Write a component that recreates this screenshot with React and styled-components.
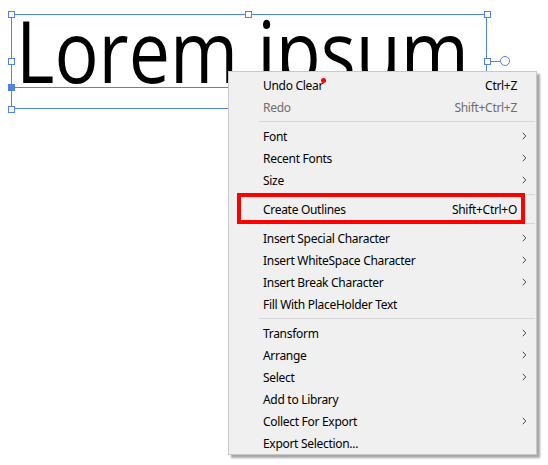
import React from "react";
import styled, { css, createGlobalStyle } from "styled-components";

const GlobalStyle = createGlobalStyle`
  html, body { margin: 0; padding: 0; background: #ffffff; }
  body { font-family: "Noto Sans", "Open Sans", sans-serif; }
`;

const Canvas = styled.div`
  position: relative;
  width: 548px;
  height: 465px;
  overflow: hidden;
  background: #ffffff;
`;

const Frame = styled.div`
  position: absolute;
  left: 11px;
  top: 14px;
  width: 476px;
  height: 95px;
  border: 1px solid #5082ea;
  box-sizing: border-box;
`;

const BigText = styled.div`
  position: absolute;
  left: 4px;
  top: -8px;
  font-family: "Open Sans", "Noto Sans", sans-serif;
  font-size: 86px;
  letter-spacing: 0;
  line-height: 1;
  color: #000;
  white-space: nowrap;
  transform: scaleX(0.855);
  transform-origin: left top;
`;

const Baseline = styled.div`
  position: absolute;
  left: -1px;
  right: -1px;
  top: 72px;
  height: 1px;
  background: #5082ea;
`;

const Handle = styled.div`
  position: absolute;
  width: 5px;
  height: 5px;
  border: 1px solid #5082ea;
  background: ${(p) => (p.$filled ? "#5082ea" : "#ffffff")};
  left: ${(p) => p.$x - 3}px;
  top: ${(p) => p.$y - 3}px;
  box-sizing: content-box;
`;

const Rotator = styled.div`
  position: absolute;
  left: 490px;
  top: 56px;
  display: flex;
  align-items: center;
  &::before {
    content: "";
    width: 10px;
    height: 1px;
    background: #5082ea;
  }
  &::after {
    content: "";
    width: 8px;
    height: 8px;
    border: 1px solid #5082ea;
    border-radius: 50%;
    background: #fff;
  }
`;

const Menu = styled.div`
  position: absolute;
  left: 228px;
  top: 71px;
  width: 309px;
  height: 384px;
  box-sizing: border-box;
  border: 1px solid #c9c9c9;
  background: #f0f0f0;
  box-shadow: 3px 3px 2px rgba(0, 0, 0, 0.35);
  padding: 2px 0;
  display: flex;
  flex-direction: column;
  font-family: "Noto Sans", "Open Sans", sans-serif;
  font-size: 12px;
  letter-spacing: -0.3px;
`;

const Item = styled.div`
  position: relative;
  display: grid;
  grid-template-columns: 1fr auto 19px;
  align-items: center;
  height: 22px;
  flex: none;
  padding-left: 34px;
  color: ${(p) => (p.$disabled ? "#6d6d6d" : "#000000")};
  white-space: nowrap;
  ${(p) =>
    p.$highlight &&
    css`
      &::after {
        content: "";
        position: absolute;
        left: 8px;
        right: 11px;
        top: -5px;
        bottom: -4px;
        border: 4px solid #ff0000;
      }
    `}
`;

const Label = styled.span`
  position: relative;
  justify-self: start;
`;

const Dot = styled.span`
  position: absolute;
  right: -3px;
  top: 1px;
  width: 5px;
  height: 5px;
  border-radius: 50%;
  background: #ff0000;
`;

const Shortcut = styled.span``;

const Arrow = styled.span`
  display: flex;
  align-items: center;
  padding-left: 5px;
`;

const Separator = styled.div`
  height: 7px;
  flex: none;
  display: flex;
  align-items: center;
  padding-left: 30px;
  padding-right: 1px;
  &::after {
    content: "";
    flex: 1;
    height: 1px;
    background: #d7d7d7;
  }
`;

const Chevron = () => (
  <svg width="5" height="8" viewBox="0 0 5 8">
    <polyline points="0.8,0.8 3.8,4 0.8,7.2" fill="none" stroke="#4a4a4a" strokeWidth="1" />
  </svg>
);

const menu = [
  { label: "Undo Clear", shortcut: "Ctrl+Z", dot: true },
  { label: "Redo", shortcut: "Shift+Ctrl+Z", disabled: true },
  "sep",
  { label: "Font", sub: true },
  { label: "Recent Fonts", sub: true },
  { label: "Size", sub: true },
  "sep",
  { label: "Create Outlines", shortcut: "Shift+Ctrl+O", highlight: true },
  "sep",
  { label: "Insert Special Character", sub: true },
  { label: "Insert WhiteSpace Character", sub: true },
  { label: "Insert Break Character", sub: true },
  { label: "Fill With PlaceHolder Text" },
  "sep",
  { label: "Transform", sub: true },
  { label: "Arrange", sub: true },
  { label: "Select", sub: true },
  { label: "Add to Library" },
  { label: "Collect For Export", sub: true },
  { label: "Export Selection..." },
];

const handles = [
  { x: 11, y: 14 },
  { x: 248, y: 14 },
  { x: 487, y: 14 },
  { x: 11, y: 61 },
  { x: 487, y: 61 },
  { x: 11, y: 87, filled: true },
  { x: 11, y: 109 },
];

export default function App() {
  return (
    <Canvas>
      <GlobalStyle />
      <Frame>
        <BigText>Lorem ipsum</BigText>
        <Baseline />
      </Frame>
      {handles.map((h, i) => (
        <Handle key={i} $x={h.x} $y={h.y} $filled={h.filled} />
      ))}
      <Rotator />
      <Menu>
        {menu.map((m, i) =>
          m === "sep" ? (
            <Separator key={i} />
          ) : (
            <Item key={i} $disabled={m.disabled} $highlight={m.highlight}>
              <Label>
                {m.label}
                {m.dot && <Dot />}
              </Label>
              <Shortcut>{m.shortcut || ""}</Shortcut>
              <Arrow>{m.sub && <Chevron />}</Arrow>
            </Item>
          )
        )}
      </Menu>
    </Canvas>
  );
}
